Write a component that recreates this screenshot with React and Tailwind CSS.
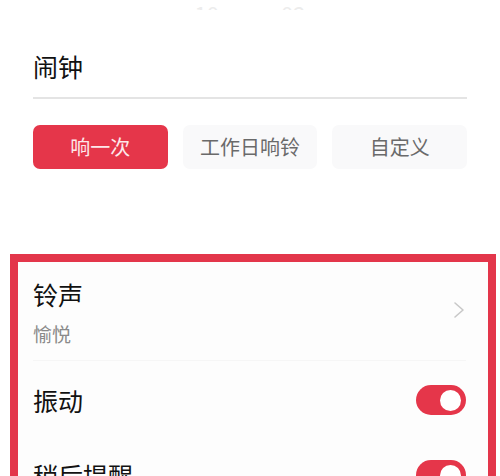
import React from 'react';

const font = { fontFamily: '"Noto Sans CJK SC", "Noto Sans", sans-serif' };

const Toggle = () => (
  <div className="flex h-[30px] w-[50px] items-center justify-end rounded-full bg-[#e5364a] pr-[5px]">
    <div className="h-[21px] w-[21px] rounded-full bg-white" />
  </div>
);

const App = () => {
  const repeatOptions = ['响一次', '工作日响铃', '自定义'];

  return (
    <div className="h-[476px] w-[500px] overflow-hidden bg-white" style={font}>
      <div className="flex h-[10px] items-end justify-center gap-[62px] overflow-hidden text-[22px] leading-none text-[#ececec]">
        <span className="translate-y-[14px]">10</span>
        <span className="translate-y-[14px]">02</span>
      </div>

      <div className="px-[33px]">
        <div className="border-b-2 border-[#e4e4e4] pt-[40px] pb-[15px] text-[25px] leading-[32px] text-[#111]">
          闹钟
        </div>

        <div className="mt-[26px] grid grid-cols-3 gap-[15px]">
          {repeatOptions.map((label, i) => (
            <div
              key={label}
              className={
                i === 0
                  ? 'flex h-[44px] items-center justify-center rounded-[7px] bg-[#e5364a] text-[20px] text-[#fde8ea]'
                  : 'flex h-[44px] items-center justify-center rounded-[7px] bg-[#f9f9fa] text-[20px] text-[#6a6a6a]'
              }
            >
              {label}
            </div>
          ))}
        </div>
      </div>

      <div className="mt-[85px] ml-[10px] mr-[4px] border-[8px] border-b-0 border-[#e3364b] bg-[#fdfdfd] pl-[15px] pr-[22px]">
        <div className="flex items-center justify-between border-b border-[#f6f6f6] pt-[15px] pb-[13px]">
          <div>
            <div className="text-[25px] leading-[34px] text-[#111]">铃声</div>
            <div className="mt-[10px] text-[19px] leading-[26px] text-[#8a8a8a]">愉悦</div>
          </div>
          <svg width="12" height="18" viewBox="0 0 12 18" fill="none" className="mt-[-4px] mr-[1px]">
            <path d="M2 2l8 7-8 7" stroke="#c8c8c8" strokeWidth="1.6" strokeLinecap="round" strokeLinejoin="round" />
          </svg>
        </div>

        <div className="flex h-[78px] items-center justify-between">
          <div className="text-[25px] leading-[34px] text-[#111]">振动</div>
          <Toggle />
        </div>

        <div className="flex items-center justify-between pt-[19px]">
          <div className="text-[25px] leading-[34px] text-[#111]">稍后提醒</div>
          <Toggle />
        </div>
      </div>
    </div>
  );
};

export default App;
